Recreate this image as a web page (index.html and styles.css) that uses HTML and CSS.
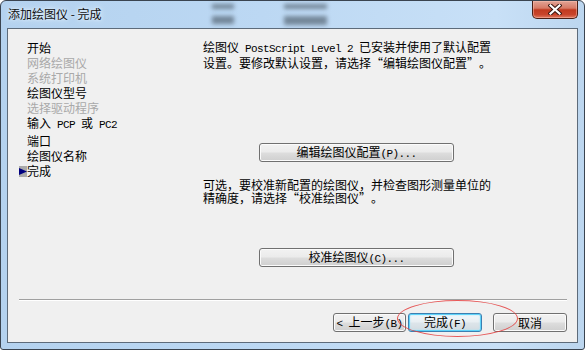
FILE: index.html
```html
<!DOCTYPE html>
<html lang="zh-CN">
<head>
    <meta charset="UTF-8">
    <meta name="viewport" content="width=device-width, initial-scale=1.0">
    <title>添加绘图仪 - 完成</title>
    <link rel="stylesheet" href="styles.css">
</head>
<body>
    <div class="window">
        <div class="titlebar">
            <span class="title">添加绘图仪 - 完成</span>
            <button class="close-btn" title="关闭">
                <svg width="14" height="11" viewBox="0 0 14 11">
                    <path d="M2.5 1.5 L11.5 9.5 M11.5 1.5 L2.5 9.5" stroke="#3b1711" stroke-width="4.2" stroke-linecap="square" fill="none"/>
                    <path d="M2.5 1.5 L11.5 9.5 M11.5 1.5 L2.5 9.5" stroke="#ffffff" stroke-width="2.2" stroke-linecap="square" fill="none"/>
                </svg>
            </button>
        </div>
        <div class="glass-blur blur-a"></div>
        <div class="glass-blur blur-b"></div>
        <div class="glass-blur blur-c"></div>
        <div class="glass-blur blur-d"></div>

        <div class="client">
            <div class="main">
                <ul class="steps">
                    <li>开始</li>
                    <li class="off">网络绘图仪</li>
                    <li class="off">系统打印机</li>
                    <li>绘图仪型号</li>
                    <li class="off">选择驱动程序</li>
                    <li>输入<span class="en"> PCP </span>或<span class="en"> PC2</span></li>
                    <li>端口</li>
                    <li>绘图仪名称</li>
                    <li class="current"><svg class="marker" width="8" height="11" viewBox="0 0 8 11"><rect width="8" height="11" fill="#aaaaaa"/><path d="M0 2 L8 5.5 L0 9 Z" fill="#000080"/></svg>完成</li>
                </ul>
                <div class="content">
                    <p class="note">绘图仪<span class="en"> PostScript Level 2 </span>已安装并使用了默认配置<br>设置。要修改默认设置，请选择<q>“</q>编辑绘图仪配置<q>”</q>。</p>
                    <button class="btn btn-wide btn-edit">编辑绘图仪配置<span class="en">(P)...</span></button>
                    <p class="note note-second">可选，要校准新配置的绘图仪，并检查图形测量单位的<br>精确度，请选择<q>“</q>校准绘图仪<q>”</q>。</p>
                    <button class="btn btn-wide btn-calibrate">校准绘图仪<span class="en">(C)...</span></button>
                </div>
            </div>
            <div class="footer">
                <div class="separator"></div>
                <div class="actions">
                    <button class="btn btn-back"><span class="en">&lt; </span>上一步<span class="en">(B)</span></button>
                    <button class="btn btn-default">完成<span class="en">(F)</span></button>
                    <button class="btn btn-cancel">取消</button>
                </div>
            </div>
        </div>

        <div class="mark-ring"></div>
    </div>
</body>
</html>
```

FILE: styles.css
```css
body {
    margin: 0;
    background: #ffffff;
    font-family: "Noto Sans CJK SC", sans-serif;
    font-size: 12px;
    color: #000000;
}

.window {
    position: relative;
    width: 585px;
    height: 350px;
    box-sizing: border-box;
    border: 1px solid #3a4450;
    border-radius: 6px 6px 3px 3px;
    background: linear-gradient(to right, #b4d2ef, #bcd8f3 45%, #c8e0f7 85%, #bcd6ef);
    display: flex;
    flex-direction: column;
    overflow: hidden;
}

.titlebar {
    height: 27px;
    display: flex;
    justify-content: space-between;
    align-items: flex-start;
    padding: 0 6px 0 7px;
    flex-shrink: 0;
}

.title {
    line-height: 26px;
    color: #101010;
    text-shadow: 0 0 6px #e8f3fd, 0 0 3px #e8f3fd;
    position: relative;
    z-index: 1;
}

.close-btn {
    width: 46px;
    height: 18px;
    margin: 0;
    padding: 0;
    border: 1px solid #4a1f16;
    border-top: none;
    border-radius: 0 0 5px 5px;
    background: linear-gradient(#e2a496 0%, #d77a66 42%, #c13a20 52%, #c9452c 80%, #e07a62 100%);
    box-shadow: inset 0 0 0 1px rgba(255, 200, 185, 0.45);
    display: flex;
    justify-content: center;
    align-items: center;
    cursor: pointer;
}

.glass-blur {
    position: absolute;
    background: #44525f;
    filter: blur(2px);
    opacity: 0.6;
}

.blur-a { left: 211px; top: 3px; width: 22px; height: 5px; }
.blur-b { left: 211px; top: 15px; width: 22px; height: 8px; }
.blur-c { left: 283px; top: 3px; width: 43px; height: 5px; }
.blur-d { left: 283px; top: 15px; width: 43px; height: 9px; }

.client {
    flex: 1;
    margin: 0 6px 6px 6px;
    border: 1px solid #5d6b7a;
    background: #f0f0f0;
    display: flex;
    flex-direction: column;
}

.main {
    height: 270px;
    display: flex;
}

.steps {
    width: 195px;
    box-sizing: border-box;
    margin: 0;
    padding: 11px 0 0 11px;
    list-style: none;
    line-height: 15px;
    white-space: nowrap;
}

.steps li {
    padding-left: 8px;
}

.steps li.off {
    color: #a9a9a9;
}

.steps .marker {
    display: inline-block;
    vertical-align: -1px;
    margin-left: -8px;
}

.en {
    font-family: "Liberation Mono", monospace;
    font-size: 11px;
    letter-spacing: -0.6px;
}

.content {
    flex: 1;
    padding-top: 11px;
}

.note {
    margin: 0;
    line-height: 13px;
    white-space: nowrap;
}

.note q {
    quotes: none;
    display: inline-block;
    width: 12px;
    text-align: center;
}

.note-second {
    margin-top: 16px;
}

.btn {
    display: block;
    height: 19px;
    margin: 0;
    padding: 0;
    box-sizing: border-box;
    border: 1px solid #707070;
    border-radius: 3px;
    background: linear-gradient(#f2f2f2 0%, #ebebeb 48%, #dddddd 52%, #cfcfcf 100%);
    box-shadow: inset 0 0 0 1px #fbfbfb;
    font-family: inherit;
    font-size: 12px;
    line-height: 16px;
    color: #000000;
    white-space: nowrap;
    cursor: pointer;
}

.btn-wide {
    width: 195px;
    margin-left: 56px;
}

.btn-edit {
    margin-top: 74px;
}

.btn-calibrate {
    margin-top: 44px;
}

.footer {
    margin-top: auto;
    padding: 0 10px 10px 11px;
}

.separator {
    border-top: 1px solid #a0a0a0;
    border-bottom: 1px solid #ffffff;
    margin-bottom: 12px;
}

.actions {
    display: flex;
    justify-content: flex-end;
}

.btn-back {
    width: 73px;
}

.btn-default {
    width: 74px;
    margin-left: 2px;
    border-color: #3c7fb1;
    background: linear-gradient(#f3f8fb 0%, #e8eef2 48%, #dde5ea 52%, #d2dbe1 100%);
    box-shadow: inset 0 0 0 1px #5fd3f9, inset 0 0 2px 1px #a6e6fb;
}

.btn-cancel {
    width: 74px;
    margin-left: 11px;
}

.mark-ring {
    position: absolute;
    left: 396px;
    top: 299px;
    width: 121px;
    height: 37px;
    box-sizing: border-box;
    border: 1px solid rgba(228, 60, 60, 0.85);
    border-radius: 50%;
    pointer-events: none;
}
```
